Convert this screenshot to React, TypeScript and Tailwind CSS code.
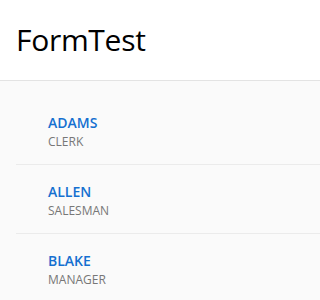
const employees = [
  { name: 'ADAMS', job: 'CLERK' },
  { name: 'ALLEN', job: 'SALESMAN' },
  { name: 'BLAKE', job: 'MANAGER' },
];

export default function App() {
  return (
    <div className="h-[300px] overflow-hidden bg-[#fafafa] font-['Open_Sans',sans-serif]">
      {/* Header */}
      <div className="h-[81px] bg-white border-b border-[#e3e3e3] flex items-center pl-[16px]">
        <h1 className="text-[30px] leading-none font-medium text-black tracking-[-0.3px] mb-[1px]">FormTest</h1>
      </div>

      {/* List */}
      <div className="pl-[16px] pt-[15px]">
        {employees.map((e) => (
          <div key={e.name} className="pl-[32px] pt-[17px] border-b border-[#ebebeb] h-[69px]">
            <div className="text-[14px] leading-[20px] font-semibold text-[#1570d0]">{e.name}</div>
            <div className="text-[12px] leading-[17px] text-[#777777]">{e.job}</div>
          </div>
        ))}
      </div>
    </div>
  );
}
